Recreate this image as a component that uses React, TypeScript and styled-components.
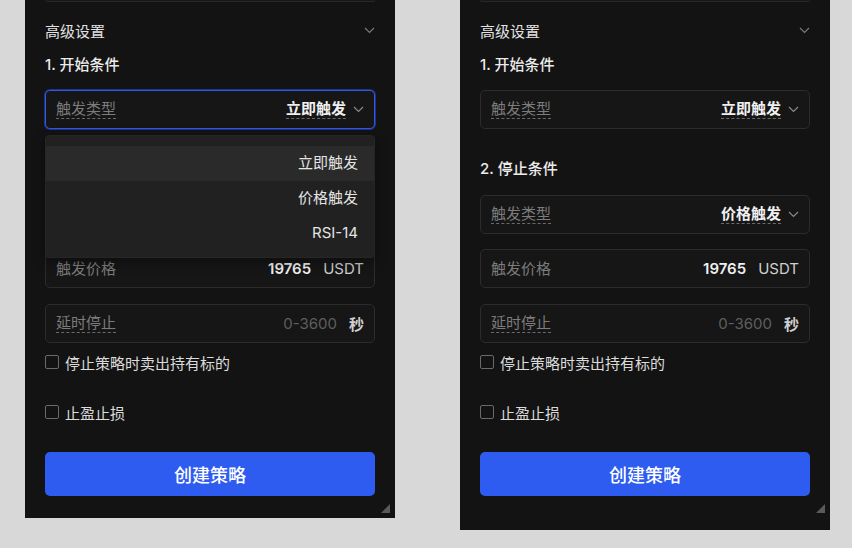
import React from 'react';
import styled, { createGlobalStyle, css } from 'styled-components';

const GlobalStyle = createGlobalStyle`
  html, body {
    margin: 0;
    padding: 0;
    background: #d8d8d8;
  }
  body {
    font-family: Inter, "Noto Sans CJK SC", sans-serif;
    font-size: 15px;
    -webkit-font-smoothing: antialiased;
  }
`;

const Page = styled.div`
  display: flex;
  align-items: flex-start;
  gap: 65px;
  padding-left: 25px;
  width: 852px;
  height: 548px;
  box-sizing: border-box;
`;

const Panel = styled.div<{ $height: number }>`
  position: relative;
  width: 370px;
  height: ${(p) => p.$height}px;
  box-sizing: border-box;
  padding: 0 20px;
  background: #131313;
  display: flex;
  flex-direction: column;
`;

const TopEdge = styled.div`
  height: 2px;
  box-sizing: border-box;
  border: 1px solid #282828;
  border-top: none;
  border-radius: 0 0 5px 5px;
  background: #171717;
`;

const Header = styled.div`
  display: flex;
  align-items: center;
  justify-content: space-between;
  height: 20px;
  margin-top: 18px;
  color: #e2e2e2;
  font-size: 15px;
`;

const SectionTitle = styled.div<{ $gap: number }>`
  height: 20px;
  line-height: 20px;
  margin-top: ${(p) => p.$gap}px;
  color: #ececec;
  font-size: 15px;
  font-weight: 500;
`;

// the part of the form that the open menu lies over
const Covered = styled.div<{ $hidden?: boolean }>`
  display: flex;
  flex-direction: column;
  visibility: ${(p) => (p.$hidden ? 'hidden' : 'visible')};
`;

const Field = styled.div<{ $gap: number; $focused?: boolean }>`
  display: flex;
  align-items: center;
  justify-content: space-between;
  height: 39px;
  box-sizing: border-box;
  margin-top: ${(p) => p.$gap}px;
  padding: 0 10px;
  background: #161616;
  border: 1px solid #2c2c2c;
  border-radius: 5px;
  font-size: 15px;
  ${(p) =>
    p.$focused &&
    css`
      border-color: #3158e6;
      box-shadow: 0 0 0 1px #1c3481;
    `}
`;

const Label = styled.span<{ $dashed?: boolean }>`
  color: #7c7c7c;
  line-height: 18px;
  ${(p) =>
    p.$dashed &&
    css`
      border-bottom: 1px dashed #6a6a6a;
    `}
`;

const Right = styled.div`
  display: flex;
  align-items: center;
  gap: 7px;
`;

const Value = styled.span<{ $dashed?: boolean }>`
  color: #f0f0f0;
  font-weight: 600;
  line-height: 18px;
  ${(p) =>
    p.$dashed &&
    css`
      border-bottom: 1px dashed #6a6a6a;
    `}
`;

const Unit = styled.span<{ $bold?: boolean }>`
  margin-left: 5px;
  color: #cfcfcf;
  font-weight: ${(p) => (p.$bold ? 600 : 400)};
`;

const Placeholder = styled.span`
  color: #5e5e5e;
`;

const CheckRow = styled.label<{ $gap: number }>`
  display: flex;
  align-items: center;
  gap: 6px;
  height: 20px;
  margin-top: ${(p) => p.$gap}px;
  color: #dcdcdc;
  font-size: 15px;
`;

const Box = styled.span`
  width: 14px;
  height: 14px;
  box-sizing: border-box;
  border: 1px solid #6a6a6a;
  border-radius: 2px;
`;

const Button = styled.button`
  height: 44px;
  margin-top: 30px;
  border: none;
  border-radius: 5px;
  background: #2e5cf1;
  color: #ffffff;
  font-family: inherit;
  font-size: 18px;
  font-weight: 500;
`;

const Menu = styled.div`
  position: absolute;
  left: 20px;
  right: 20px;
  top: 135px;
  padding: 10px 0 6px;
  background: #212121;
  border: 1px solid #262626;
  border-radius: 4px;
  box-shadow: 0 4px 12px rgba(0, 0, 0, 0.4);
`;

const MenuItem = styled.div<{ $active?: boolean }>`
  height: 35px;
  line-height: 34px;
  padding-right: 16px;
  text-align: right;
  color: #e4e4e4;
  font-size: 15px;
  background: ${(p) => (p.$active ? '#2a2a2a' : 'transparent')};
`;

const Resize = styled.div`
  position: absolute;
  top: 504px;
  right: 5px;
  width: 0;
  height: 0;
  border-left: 9px solid transparent;
  border-bottom: 9px solid #5a5a5a;
`;

const Chevron = ({ color = '#8a8a8a' }: { color?: string }) => (
  <svg width="11" height="7" viewBox="0 0 11 7" fill="none">
    <polyline points="1,1 5.5,5.5 10,1" stroke={color} strokeWidth="1.2" />
  </svg>
);

const StrategyPanel = ({ open, height }: { open?: boolean; height: number }) => (
  <Panel $height={height}>
    <TopEdge />
    <Header>
      <span>高级设置</span>
      <Chevron color="#7a7a7a" />
    </Header>
    <SectionTitle $gap={15}>1. 开始条件</SectionTitle>
    <Field $gap={15} $focused={open}>
      <Label $dashed>触发类型</Label>
      <Right>
        <Value $dashed>立即触发</Value>
        <Chevron />
      </Right>
    </Field>
    <Covered $hidden={open}>
      <SectionTitle $gap={30}>2. 停止条件</SectionTitle>
      <Field $gap={16}>
        <Label $dashed>触发类型</Label>
        <Right>
          <Value $dashed>价格触发</Value>
          <Chevron />
        </Right>
      </Field>
    </Covered>
    <Field $gap={15}>
      <Label>触发价格</Label>
      <Right>
        <Value>19765</Value>
        <Unit>USDT</Unit>
      </Right>
    </Field>
    <Field $gap={16}>
      <Label $dashed>延时停止</Label>
      <Right>
        <Placeholder>0-3600</Placeholder>
        <Unit $bold>秒</Unit>
      </Right>
    </Field>
    <CheckRow $gap={9}>
      <Box />
      停止策略时卖出持有标的
    </CheckRow>
    <CheckRow $gap={30}>
      <Box />
      止盈止损
    </CheckRow>
    <Button>创建策略</Button>
    {open && (
      <Menu>
        <MenuItem $active>立即触发</MenuItem>
        <MenuItem>价格触发</MenuItem>
        <MenuItem>RSI-14</MenuItem>
      </Menu>
    )}
    <Resize />
  </Panel>
);

export default function App() {
  return (
    <>
      <GlobalStyle />
      <Page>
        <StrategyPanel open height={518} />
        <StrategyPanel height={530} />
      </Page>
    </>
  );
}
